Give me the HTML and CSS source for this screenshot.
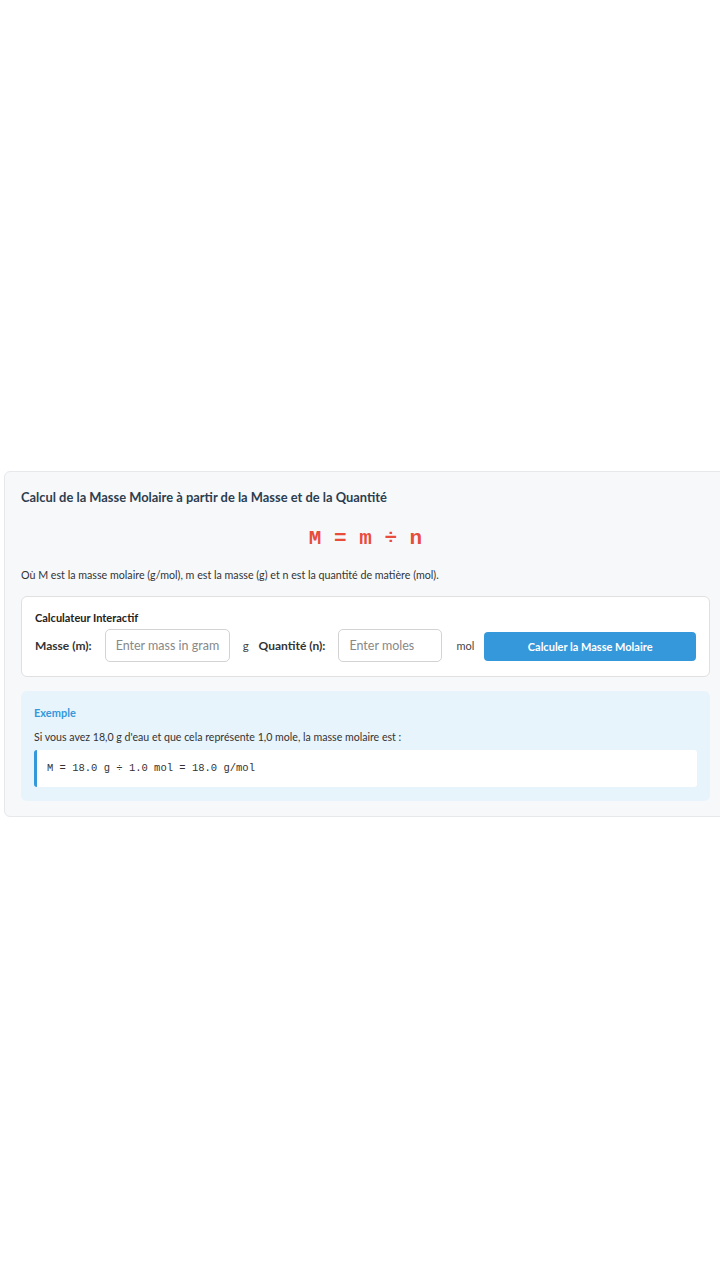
FILE: index.html
```html
<!DOCTYPE html>
<html lang="fr">
<head>
<meta charset="utf-8">
<title>Masse Molaire</title>
<link rel="stylesheet" href="styles.css">
</head>
<body>
<div class="card">
  <h2 class="title">Calcul de la Masse Molaire à partir de la Masse et de la Quantité</h2>
  <div class="formula">M = m ÷ n</div>
  <p class="desc">Où M est la masse molaire (g/mol), m est la masse (g) et n est la quantité de matière (mol).</p>
  <div class="calc">
    <h3 class="calc-title">Calculateur Interactif</h3>
    <div class="row">
      <label class="lbl">Masse (m):</label>
      <input class="inp inp-mass" type="text" placeholder="Enter mass in grams">
      <span class="unit">g</span>
      <label class="lbl">Quantité (n):</label>
      <input class="inp inp-mol" type="text" placeholder="Enter moles">
      <span class="unit unit-mol">mol</span>
      <button class="btn">Calculer la Masse Molaire</button>
    </div>
  </div>
  <div class="example">
    <h4 class="ex-title">Exemple</h4>
    <p class="ex-text">Si vous avez 18,0 g d'eau et que cela représente 1,0 mole, la masse molaire est :</p>
    <div class="code">M = 18.0 g ÷ 1.0 mol = 18.0 g/mol</div>
  </div>
</div>
</body>
</html>
```
FILE: styles.css
```css
html, body {
  margin: 0;
  padding: 0;
  background: #ffffff;
}
body {
  min-height: 1280px;
  display: flex;
  align-items: center;
  font-family: Lato, "Open Sans", sans-serif;
  color: #333;
}
.card {
  box-sizing: border-box;
  width: 723px;
  flex: none;
  margin-left: 4px;
  margin-top: 7px;
  background: #f7f8fa;
  border: 1px solid #e6e8eb;
  border-radius: 6px;
  padding: 15px 16px 15px 16px;
}
.title {
  margin: 0;
  font-size: 12.9px;
  font-weight: 700;
  color: #2c3e50;
  line-height: 20px;
}
.formula {
  margin-top: 19px;
  text-align: center;
  font-family: "Liberation Mono", "Courier New", monospace;
  font-weight: 700;
  font-size: 21px;
  color: #e74c3c;
  line-height: 26px;
}
.desc {
  margin: 15px 0 0 0;
  font-size: 10.7px;
  line-height: 16px;
  color: #333;
}
.calc {
  margin-top: 13px;
  background: #fff;
  border: 1px solid #e0e0e0;
  border-radius: 6px;
  padding: 13px 13px 14px 13px;
}
.calc-title {
  margin: 0;
  font-size: 11px;
  font-weight: 700;
  color: #222;
  line-height: 16px;
}
.row {
  margin-top: 3px;
  display: flex;
  align-items: center;
}
.lbl {
  font-size: 12px;
  font-weight: 700;
  color: #333;
}
.inp {
  box-sizing: border-box;
  height: 33px;
  border: 1px solid #d3d3d3;
  border-radius: 5px;
  padding: 0 10px;
  font-family: Lato, "Open Sans", sans-serif;
  font-size: 12.5px;
  color: #333;
  background: #fff;
  margin-left: 13px;
}
.inp::placeholder { color: #888; }
.inp-mass { width: 125px; }
.inp-mol { width: 104px; }
.unit {
  font-size: 11.5px;
  color: #444;
  margin: 0 10px 0 13px;
}
.unit-mol { font-size: 11px; margin: 0 10px 0 14px; }
.btn {
  flex: 1;
  height: 29px;
  margin-top: 2px;
  border: none;
  border-radius: 4px;
  background: #3498db;
  color: #fff;
  font-family: Lato, "Open Sans", sans-serif;
  font-weight: 700;
  font-size: 11px;
}
.example {
  margin-top: 14px;
  background: #e8f4fc;
  border-radius: 6px;
  padding: 14px 13px 14px 13px;
}
.ex-title {
  margin: 0;
  font-size: 11px;
  font-weight: 700;
  color: #3498db;
  line-height: 16px;
}
.ex-text {
  margin: 8px 0 0 0;
  font-size: 10.6px;
  line-height: 16px;
  color: #333;
}
.code {
  margin-top: 5px;
  background: #fff;
  border-left: 3px solid #3498db;
  border-radius: 3px;
  padding: 0 10px;
  height: 37px;
  line-height: 37px;
  font-family: "Liberation Mono", "Courier New", monospace;
  font-weight: 400;
  font-size: 10.5px;
  color: #333;
}
```
